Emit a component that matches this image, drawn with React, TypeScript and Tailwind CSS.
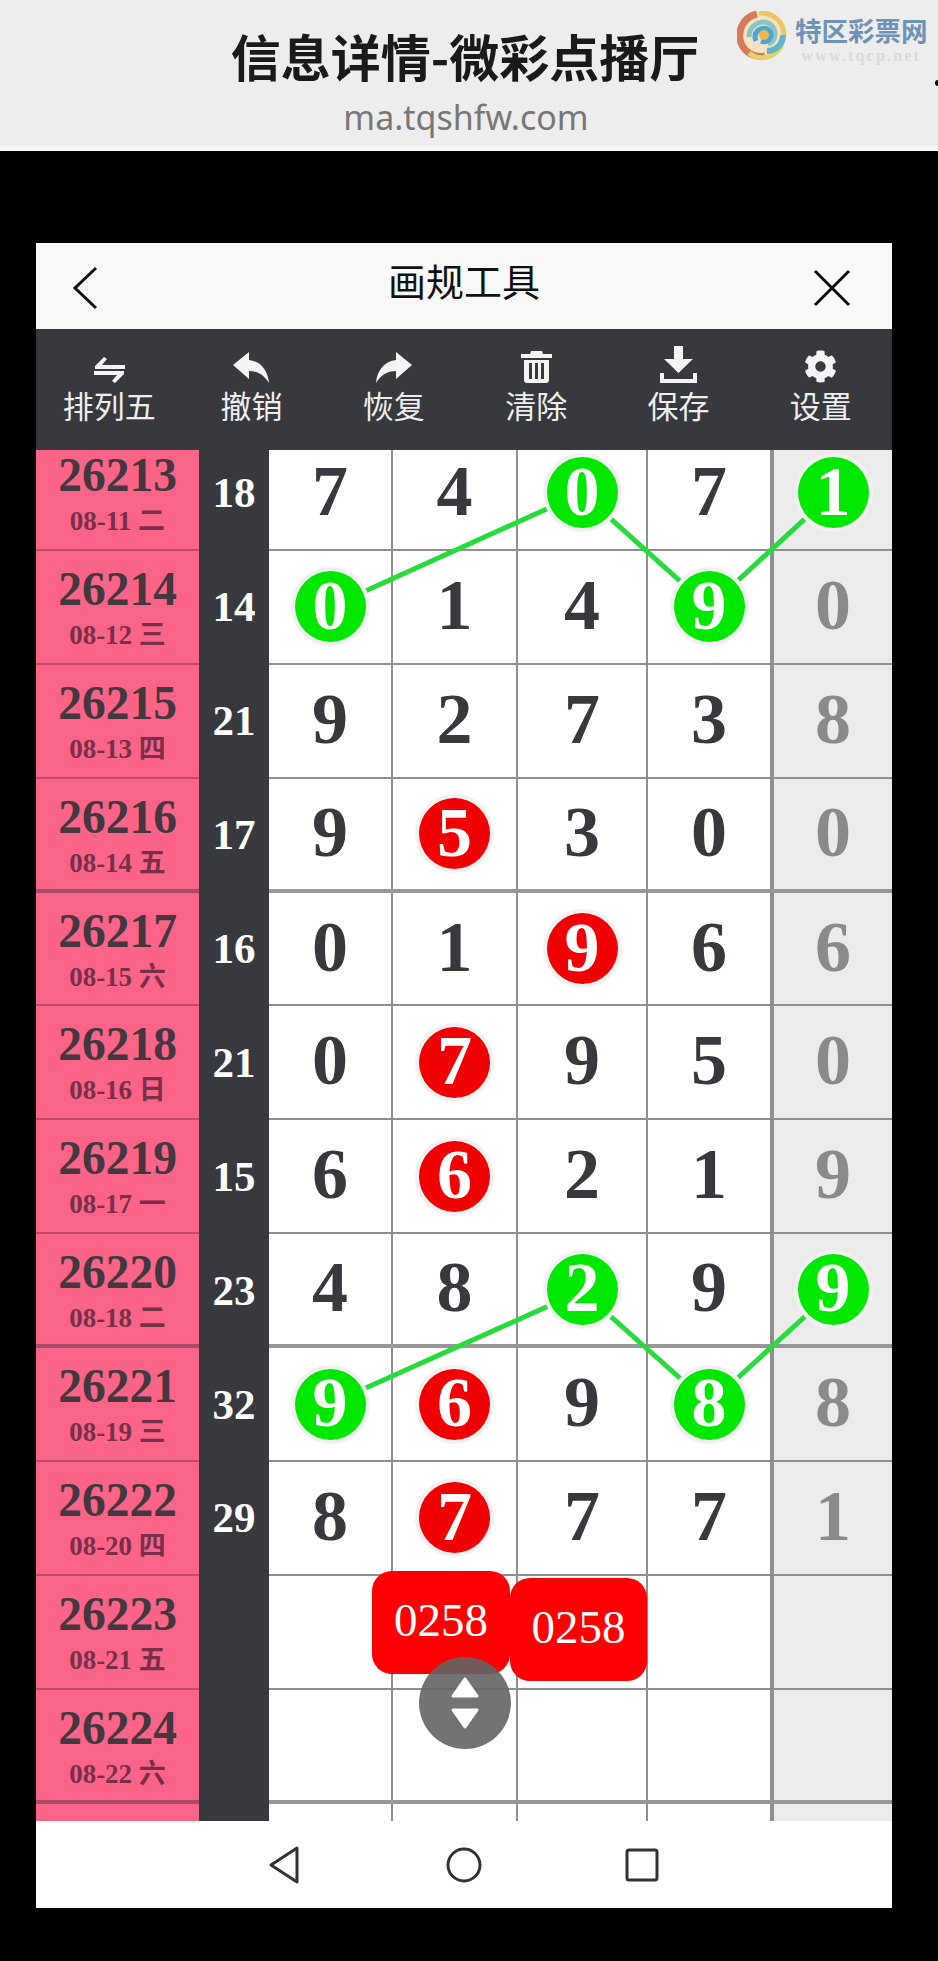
import { FaCog } from "react-icons/fa";

type Mark = "g" | "r" | null;
type Row = {
  issue: string;
  date: string;
  sum: string;
  nums: string[];
  marks?: Record<number, Mark>;
};

const ROWS: Row[] = [
  { issue: "26213", date: "08-11 二", sum: "18", nums: ["7", "4", "0", "7", "1"], marks: { 2: "g", 4: "g" } },
  { issue: "26214", date: "08-12 三", sum: "14", nums: ["0", "1", "4", "9", "0"], marks: { 0: "g", 3: "g" } },
  { issue: "26215", date: "08-13 四", sum: "21", nums: ["9", "2", "7", "3", "8"] },
  { issue: "26216", date: "08-14 五", sum: "17", nums: ["9", "5", "3", "0", "0"], marks: { 1: "r" } },
  { issue: "26217", date: "08-15 六", sum: "16", nums: ["0", "1", "9", "6", "6"], marks: { 2: "r" } },
  { issue: "26218", date: "08-16 日", sum: "21", nums: ["0", "7", "9", "5", "0"], marks: { 1: "r" } },
  { issue: "26219", date: "08-17 一", sum: "15", nums: ["6", "6", "2", "1", "9"], marks: { 1: "r" } },
  { issue: "26220", date: "08-18 二", sum: "23", nums: ["4", "8", "2", "9", "9"], marks: { 2: "g", 4: "g" } },
  { issue: "26221", date: "08-19 三", sum: "32", nums: ["9", "6", "9", "8", "8"], marks: { 0: "g", 1: "r", 3: "g" } },
  { issue: "26222", date: "08-20 四", sum: "29", nums: ["8", "7", "7", "7", "1"], marks: { 1: "r" } },
  { issue: "26223", date: "08-21 五", sum: "", nums: ["", "", "", "", ""] },
  { issue: "26224", date: "08-22 六", sum: "", nums: ["", "", "", "", ""] },
  { issue: "", date: "", sum: "", nums: ["", "", "", "", ""] },
];

const SANS = "font-['Noto_Sans_CJK_SC',sans-serif]";
const SERIF = "font-['Liberation_Serif','Noto_Sans_CJK_SC',serif]";

function Swap() {
  return (
    <svg width="31" height="26" viewBox="0 0 31 26" fill="#f4f4f4">
      <path d="M10 0 L13 2 L8 8 L31 8 L31 12 L1 12 L1 9 Z" />
      <path d="M21 26 L18 24 L23 18 L0 18 L0 14 L30 14 L30 17 Z" />
    </svg>
  );
}

function Reply({ flip = false }: { flip?: boolean }) {
  return (
    <svg width="36" height="31" viewBox="0 0 36 31" fill="#f4f4f4" className={flip ? "-scale-x-100" : ""}>
      <path d="M0 13 L16 0 L16 8 C27 9 35 18 36 31 C31 23 25 19 16 19 L16 27 Z" />
    </svg>
  );
}

function Trash() {
  return (
    <svg width="31" height="32" viewBox="0 0 31 32" fill="#f4f4f4">
      <path d="M10 0 H21 L22 3 H31 V7 H0 V3 H9 Z" />
      <path fillRule="evenodd" d="M3 9 H28 V29 Q28 32 25 32 H6 Q3 32 3 29 Z M8 12 V28 H11 V12 Z M14 12 V28 H17 V12 Z M20 12 V28 H23 V12 Z" />
    </svg>
  );
}

function Download() {
  return (
    <svg width="37" height="37" viewBox="0 0 37 37" fill="#f4f4f4">
      <path d="M14 0 H23 V13 H33 L18.5 27 L4 13 H14 Z" />
      <path d="M0 27 H4 V33 H33 V27 H37 V37 H0 Z" />
    </svg>
  );
}

const TOOLS = [
  { label: "排列五", icon: <Swap /> },
  { label: "撤销", icon: <Reply /> },
  { label: "恢复", icon: <Reply flip /> },
  { label: "清除", icon: <Trash /> },
  { label: "保存", icon: <Download /> },
  { label: "设置", icon: <FaCog size={33} color="#f4f4f4" /> },
];

function Logo() {
  return (
    <div className="absolute left-[737px] top-[11px] flex items-start gap-[8px]">
      <svg width="50" height="50" viewBox="0 0 50 50" fill="none">
        <circle cx="25" cy="25" r="24" fill="#f3e2c4" />
        <path d="M20 3 C6 6 0 20 4 32 C8 42 18 47 28 45" stroke="#d8795a" strokeWidth="7" />
        <path d="M22 2 C36 1 47 11 47 24" stroke="#eec65f" strokeWidth="5" />
        <path d="M12 42 C22 50 38 48 45 34" stroke="#e3d264" strokeWidth="5" />
        <path d="M46 24 C46 34 38 40 30 40" stroke="#62b3cf" strokeWidth="6" />
        <path d="M12 26 C12 14 24 8 33 13 C40 18 40 30 31 33" stroke="#8fc3c0" strokeWidth="5" />
        <path d="M19 30 C15 20 26 14 32 19 C37 25 31 33 24 30" stroke="#4aa6d6" strokeWidth="5" />
        <circle cx="27" cy="24" r="5" fill="#eeb64a" />
      </svg>
      <div className="flex flex-col items-center">
        <div className={`${SANS} font-bold text-[26.5px] leading-[30px] mt-[4px] text-[#6f93b8] whitespace-nowrap`}>特区彩票网</div>
        <div className="font-['Liberation_Serif',serif] font-bold text-[16px] leading-[18px] mt-[2px] tracking-[2.2px] text-[#dadada] whitespace-nowrap">www.tqcp.net</div>
      </div>
    </div>
  );
}

function Cell({ value, mark, index }: { value: string; mark?: Mark; index: number }) {
  const last = index === 4;
  const sep = index === 3 ? "border-r-4" : last ? "" : "border-r-2";
  return (
    <div className={`flex items-center justify-center ${sep} border-[#8f8f8f] ${last ? "bg-[#ebebeb]" : "bg-white"}`}>
      {mark ? (
        <span
          className={`relative z-10 flex h-[71px] w-[71px] items-center justify-center rounded-full pb-[2px] text-white text-[70px] leading-none shadow-[0_0_0_4px_#f1f1f1] ${mark === "g" ? "bg-[#00e800]" : "bg-[#f00000]"}`}
        >
          {value}
        </span>
      ) : (
        <span className={`mb-[4px] text-[72px] leading-none ${last ? "text-[#8a8a8a]" : "text-[#38383f]"}`}>{value}</span>
      )}
    </div>
  );
}

export default function App() {
  return (
    <div className="min-h-[1961px] w-[938px] bg-black">
      <header className="relative flex h-[151px] flex-col items-center border-b-[5px] border-[#f6f6f6] bg-[#ededed]">
        <div className={`${SANS} mt-[25px] mr-[8px] text-[50px] font-bold leading-[60px] text-[#1a1a1a]`}>信息详情-微彩点播厅</div>
        <div className="font-['Noto_Sans',sans-serif] mt-[9px] mr-[6px] text-[34px] leading-[46px] text-[#777777]">ma.tqshfw.com</div>
        <Logo />
        <span className="absolute right-0 top-[80px] h-[6px] w-[3px] rounded-l-full bg-black" />
      </header>

      <main className="ml-[36px] mt-[92px] w-[856px]">
        <div className="relative flex h-[86px] items-center justify-center bg-[#f8f8f8]">
          <svg className="absolute left-[36px] top-[23px]" width="26" height="44" viewBox="0 0 26 44" fill="none" stroke="#111" strokeWidth="3">
            <path d="M24 2 L3 22 L24 42" />
          </svg>
          <div className={`${SANS} mb-[12px] text-[38px] leading-[48px] text-[#111]`}>画规工具</div>
          <svg className="absolute right-[41px] top-[26px]" width="38" height="38" viewBox="0 0 38 38" fill="none" stroke="#111" strokeWidth="3">
            <path d="M2 2 L36 36 M36 2 L2 36" />
          </svg>
        </div>

        <div className="grid h-[121px] grid-cols-6 bg-[#38383f] pl-[2px]">
          {TOOLS.map((t) => (
            <div key={t.label} className="flex flex-col items-center">
              <div className="flex h-[57px] items-end justify-center pb-[3px]">{t.icon}</div>
              <div className={`${SANS} -mt-[2px] text-[31px] leading-[42px] text-[#eeeeee]`}>{t.label}</div>
            </div>
          ))}
        </div>

        <div className={`relative h-[1371px] overflow-hidden ${SERIF} font-bold`}>
          <div className="-mt-[13px]">
            {ROWS.map((row, i) => {
              const thick = i % 4 === 3;
              return (
                <div key={i} className="grid h-[113.9px] grid-cols-[163px_70px_124px_125px_130px_126px_118px]">
                  <div className={`flex flex-col items-center bg-[#fb6487] pt-[16px] ${thick ? "border-b-4 border-[#a94c68]" : "border-b-2 border-[#bd4c6c]"}`}>
                    <div className="text-[47.5px] leading-[44px] text-[#43383f]">{row.issue}</div>
                    <div className="mt-[2px] text-[27px] leading-[44px] text-[#78304a]">{row.date}</div>
                  </div>
                  <div className="flex items-center justify-center bg-[#38383f] pb-[2px] text-[43px] leading-none text-white">{row.sum}</div>
                  {row.nums.map((n, j) => (
                    <div key={j} className={`grid ${thick ? "border-b-4 border-[#979797]" : "border-b-2 border-[#8f8f8f]"}`}>
                      <Cell value={n} mark={row.marks?.[j]} index={j} />
                    </div>
                  ))}
                </div>
              );
            })}
          </div>

          <svg className="pointer-events-none absolute inset-0 z-[5]" width="856" height="1371" fill="none" stroke="#26dc3a" strokeWidth="5">
            <polyline points="294,157 546,43 673,157 797,43" />
            <polyline points="294,954 546,841 673,954 797,841" />
          </svg>

          <div className="absolute left-[336px] top-[1121px] z-20 flex h-[103px] w-[138px] items-center justify-center rounded-[20px] bg-[#ff0000] pb-[4px] font-normal text-[47px] leading-none text-white">0258</div>
          <div className="absolute left-[474px] top-[1128px] z-20 flex h-[103px] w-[137px] items-center justify-center rounded-[20px] bg-[#ff0000] pb-[4px] font-normal text-[47px] leading-none text-white">0258</div>
          <div className="absolute left-[383px] top-[1207px] z-30 flex h-[92px] w-[92px] items-center justify-center rounded-full bg-[#646464]/90">
            <svg width="28" height="52" viewBox="0 0 28 52" fill="#fff" stroke="#fff" strokeWidth="3" strokeLinejoin="round">
              <path d="M14 2 L26 19 H2 Z" />
              <path d="M14 50 L26 33 H2 Z" />
            </svg>
          </div>
        </div>

        <div className="flex h-[87px] items-center bg-white">
          <svg className="ml-[232px]" width="32" height="38" viewBox="0 0 32 38" fill="none" stroke="#333" strokeWidth="3" strokeLinejoin="round">
            <path d="M29 2 V36 L3 19 Z" />
          </svg>
          <svg className="ml-[146px]" width="36" height="36" viewBox="0 0 36 36" fill="none" stroke="#333" strokeWidth="3">
            <circle cx="18" cy="18" r="16" />
          </svg>
          <svg className="ml-[143px]" width="34" height="34" viewBox="0 0 34 34" fill="none" stroke="#333" strokeWidth="3">
            <rect x="2" y="2" width="30" height="30" rx="2" />
          </svg>
        </div>
      </main>
    </div>
  );
}
